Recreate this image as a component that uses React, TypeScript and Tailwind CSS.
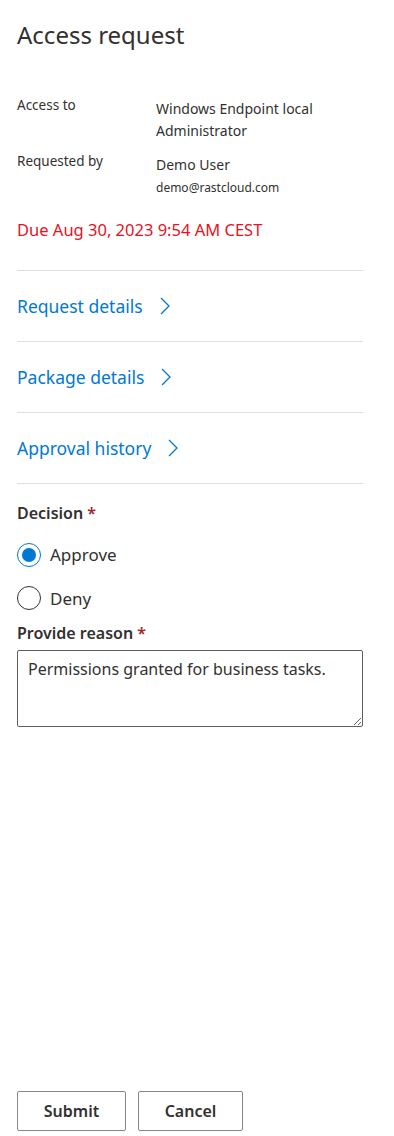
import React, { useState } from "react";

const font = { fontFamily: '"Noto Sans", "Open Sans", sans-serif' };

const Chevron = () => (
  <svg width="12" height="20" viewBox="0 0 12 20" fill="none" className="ml-4">
    <path d="M2 2 L10 10 L2 18" stroke="#0078d4" strokeWidth="1.3" />
  </svg>
);

const LinkRow: React.FC<{ label: string }> = ({ label }) => (
  <div className="border-b border-[#e1dfdd] h-[71px] flex items-center">
    <button className="flex items-center text-[17.5px] text-[#0078d4]">
      {label}
      <Chevron />
    </button>
  </div>
);

const Radio: React.FC<{ checked: boolean; label: string; onClick: () => void }> = ({
  checked,
  label,
  onClick,
}) => (
  <button onClick={onClick} className="flex items-center gap-[9px] text-[17px] text-[#323130]">
    <span
      className={`w-[24px] h-[24px] rounded-full border flex items-center justify-center ${
        checked ? "border-[#0078d4]" : "border-[#323130]"
      }`}
    >
      {checked && <span className="w-[14px] h-[14px] rounded-full bg-[#0078d4]" />}
    </span>
    {label}
  </button>
);

export default function App() {
  const [decision, setDecision] = useState("approve");

  return (
    <div style={font} className="h-[1136px] flex flex-col px-[17px] bg-white text-[#323130]">
      <h1 className="text-[24px] leading-[32px] pt-[19px]">Access request</h1>

      <div className="mt-[43px] grid grid-cols-[139px_1fr] text-[14px] leading-[22px]">
        <div className="text-[13.5px]">Access to</div>
        <div className="pt-[4px]">Windows Endpoint local<br />Administrator</div>
        <div className="text-[13.5px] mt-[8px]">Requested by</div>
        <div className="mt-[12px]">
          Demo User
          <div className="text-[12px] leading-[24px]">demo@rastcloud.com</div>
        </div>
      </div>

      <div className="mt-[19px] text-[16.5px] leading-[22px] text-[#e81123]">
        Due Aug 30, 2023 9:54 AM CEST
      </div>

      <div className="w-[346px] mt-[29px] border-t border-[#e1dfdd]">
        <LinkRow label="Request details" />
        <LinkRow label="Package details" />
        <LinkRow label="Approval history" />
      </div>

      <div className="mt-[17px] text-[16px] font-semibold">
        Decision <span className="text-[#a4262c]">*</span>
      </div>
      <div className="mt-[17px] flex flex-col gap-[18px] items-start">
        <Radio checked={decision === "approve"} label="Approve" onClick={() => setDecision("approve")} />
        <Radio checked={decision === "deny"} label="Deny" onClick={() => setDecision("deny")} />
      </div>
      <div className="mt-[10px] text-[16px] font-semibold">
        Provide reason <span className="text-[#a4262c]">*</span>
      </div>
      <textarea
        defaultValue="Permissions granted for business tasks."
        style={font}
        className="mt-[5px] w-[346px] h-[77px] border border-[#605e5c] rounded-[2px] px-[10px] py-[6px] text-[16px] text-[#323130] outline-none"
      />

      <div className="mt-auto mb-[5px] flex gap-[12px]">
        <button className="w-[109px] h-[40px] border border-[#8a8886] rounded-[2px] text-[16px] font-semibold">
          Submit
        </button>
        <button className="w-[105px] h-[40px] border border-[#8a8886] rounded-[2px] text-[16px] font-semibold">
          Cancel
        </button>
      </div>
    </div>
  );
}
